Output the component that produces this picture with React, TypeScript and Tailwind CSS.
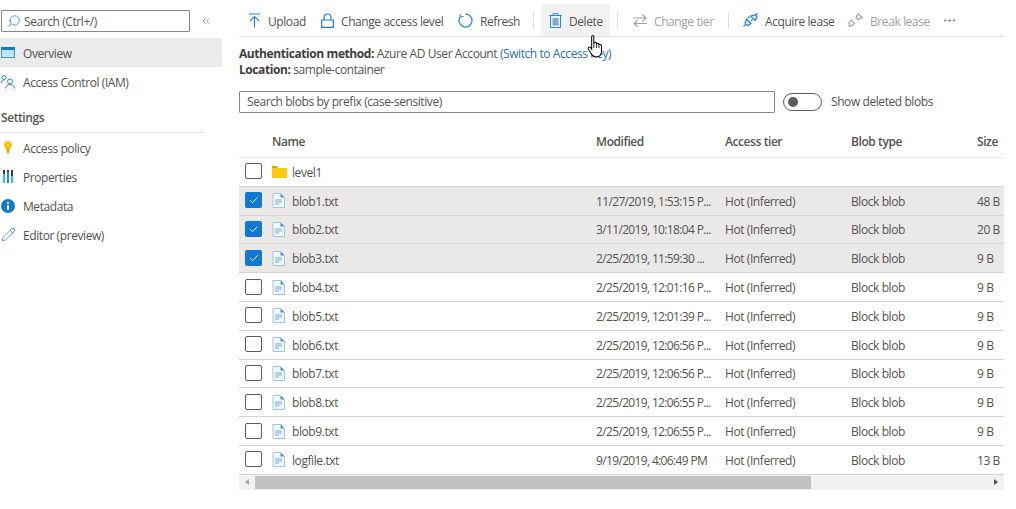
import React from "react";
import { ChevronsLeft, Search, MoreHorizontal, Pencil } from "lucide-react";

const rows = [
  { name: "level1", modified: "", tier: "", type: "", size: "", folder: true },
  { name: "blob1.txt", modified: "11/27/2019, 1:53:15 P...", tier: "Hot (Inferred)", type: "Block blob", size: "48 B", checked: true },
  { name: "blob2.txt", modified: "3/11/2019, 10:18:04 P...", tier: "Hot (Inferred)", type: "Block blob", size: "20 B", checked: true },
  { name: "blob3.txt", modified: "2/25/2019, 11:59:30 ...", tier: "Hot (Inferred)", type: "Block blob", size: "9 B", checked: true },
  { name: "blob4.txt", modified: "2/25/2019, 12:01:16 P...", tier: "Hot (Inferred)", type: "Block blob", size: "9 B" },
  { name: "blob5.txt", modified: "2/25/2019, 12:01:39 P...", tier: "Hot (Inferred)", type: "Block blob", size: "9 B" },
  { name: "blob6.txt", modified: "2/25/2019, 12:06:56 P...", tier: "Hot (Inferred)", type: "Block blob", size: "9 B" },
  { name: "blob7.txt", modified: "2/25/2019, 12:06:56 P...", tier: "Hot (Inferred)", type: "Block blob", size: "9 B" },
  { name: "blob8.txt", modified: "2/25/2019, 12:06:55 P...", tier: "Hot (Inferred)", type: "Block blob", size: "9 B" },
  { name: "blob9.txt", modified: "2/25/2019, 12:06:55 P...", tier: "Hot (Inferred)", type: "Block blob", size: "9 B" },
  { name: "logfile.txt", modified: "9/19/2019, 4:06:49 PM", tier: "Hot (Inferred)", type: "Block blob", size: "13 B" },
];

function FileIcon() {
  return (
    <svg width="13" height="15" viewBox="0 0 13 15" className="shrink-0">
      <path d="M1 .5h7.500L12.500 4.500v10H1z" fill="#f4f9fe" stroke="#9cc5ea" />
      <path d="M8.500.5v4h4z" fill="#4a90d9" />
      <path d="M3 7h7M3 9h7M3 11h4" stroke="#6fabe4" />
    </svg>
  );
}

function FolderIcon() {
  return (
    <svg width="15" height="12" viewBox="0 0 15 12" className="shrink-0">
      <path d="M0 1h5l1 1h9v10H0z" fill="#ffc90e" />
      <path d="M0 0h5l1 2H0z" fill="#d9a400" />
    </svg>
  );
}

function Checkbox({ checked }: { checked?: boolean }) {
  if (checked) {
    return (
      <div className="w-[17px] h-[16px] rounded-[2px] bg-[#0f78d4] flex items-center justify-center shrink-0">
        <svg width="10" height="8" viewBox="0 0 10 8">
          <path d="M1 4l2.600 2.600L9 1" fill="none" stroke="#fff" strokeWidth="1" />
        </svg>
      </div>
    );
  }
  return <div className="w-[17px] h-[16px] rounded-[2px] border border-[#605e5c] bg-white shrink-0" />;
}

function UploadIcon() {
  return (
    <svg width="13" height="15" viewBox="0 0 13 15" fill="none" stroke="#2b88d8" strokeWidth="1.200">
      <path d="M1 1h11M6.500 14.500V3.500M2 8l4.500-4.500L11 8" />
    </svg>
  );
}

function LockIcon() {
  return (
    <svg width="13" height="15" viewBox="0 0 13 15" fill="none" stroke="#1a7fd4" strokeWidth="1.200">
      <path d="M3 7V4.500a3.500 3.500 0 0 1 7 0V7" />
      <path d="M.7 7h11.600v7.300H.7z" />
    </svg>
  );
}

function RefreshIcon() {
  return (
    <svg width="15" height="15" viewBox="0 0 15 15" fill="none" stroke="#2b88d8" strokeWidth="1.300">
      <path d="M7.500 1a6.500 6.500 0 1 1-5.200 2.600" />
      <path d="M2 .8l.6 3 3-.3" strokeWidth="1" />
    </svg>
  );
}

function TrashIcon() {
  return (
    <svg width="13" height="15" viewBox="0 0 13 15">
      <path d="M0 2.500h13M4 2.500V.7h5v1.800" fill="none" stroke="#2b88d8" />
      <path d="M1.500 2.500h10v12h-10z" fill="#eaf3fb" stroke="#2b88d8" />
      <path d="M3.500 5h6v7.500h-6z" fill="#7fa9cc" />
    </svg>
  );
}

function SwapIcon() {
  return (
    <svg width="14" height="13" viewBox="0 0 14 13" fill="none" stroke="#a19f9d" strokeWidth="1.100">
      <path d="M0 4h13M9.500.5L13 4 9.500 7.500" />
      <path d="M14 9.500H1M4.500 6L1 9.500 4.500 13" />
    </svg>
  );
}

function PlugIcon({ color }: { color: string }) {
  return (
    <svg width="15" height="14" viewBox="0 0 15 14" fill="none" stroke={color} strokeWidth="1.200" className="shrink-0">
      <path d="M.5 13.500l2.500-2.500M12 3l2.500-2.500" />
      <path d="M3.500 6l4.500 4.500-1.500 1a2.300 2.300 0 0 1-3.500-3.500z" fill="#d7e9f8" />
      <path d="M7.500 3l4.500 4.500 1-1.500a2.300 2.300 0 0 0-3.500-3.500z" fill="#d7e9f8" />
      <path d="M5 5l1.500-1.500M8 8l1.500-1.500" />
    </svg>
  );
}

function BrokenPlugIcon() {
  return (
    <svg width="15" height="14" viewBox="0 0 15 14" fill="none" stroke="#a19f9d" strokeWidth="1.100" className="shrink-0">
      <path d="M.5 13.500L2 12" />
      <path d="M3 7l3.500 3.500-1.500 1.500a2.300 2.300 0 0 1-3.300-3.300z" />
      <path d="M8 4.500L10 .7l4 3.800-3.800 2.200z" />
    </svg>
  );
}

function PeopleIcon() {
  return (
    <svg width="14" height="14" viewBox="0 0 14 14" fill="none" stroke="#2b88d8" strokeWidth="1">
      <circle cx="3" cy="2.500" r="2" />
      <path d="M.5 8c0-2 1-3 3-3" />
      <circle cx="9" cy="6.500" r="2.500" />
      <path d="M4.500 13.500c0-2.500 2-4 4.500-4s4.500 1.500 4.500 4" />
    </svg>
  );
}

function KeyIcon() {
  return (
    <svg width="10" height="13" viewBox="0 0 10 13">
      <circle cx="5" cy="4" r="4" fill="#fcc419" />
      <path d="M3.500 7h3v4L5 13l-1.500-2z" fill="#e0a500" />
    </svg>
  );
}

function PropertiesIcon() {
  return (
    <svg width="12" height="13" viewBox="0 0 12 13">
      <path d="M1 0h2v13H1z" fill="#32bedd" />
      <path d="M5 0h2v13H5z" fill="#2b88d8" />
      <path d="M9 0h2v13H9z" fill="#32bedd" />
      <path d="M1 0h2v4H1zM9 0h2v6H9zM5 0h2v2H5z" fill="#3a3a3a" />
    </svg>
  );
}

function InfoIcon() {
  return (
    <svg width="14" height="14" viewBox="0 0 14 14">
      <circle cx="7" cy="7" r="7" fill="#0f78d4" />
      <path d="M6 6h2v5H6zM6 3h2v2H6z" fill="#fff" />
    </svg>
  );
}

function NavItem({ icon, label, active }: { icon: React.ReactNode; label: string; active?: boolean }) {
  return (
    <div className={`h-[29px] flex items-center ${active ? "bg-[#ebebeb]" : ""}`}>
      <div className="w-[23px] pl-[1px] flex justify-start">{icon}</div>
      <span className="pt-[2px]">{label}</span>
    </div>
  );
}

function Sep() {
  return <div className="w-px h-[17px] bg-[#e1dfdd]" />;
}

function ToolText({ width, children }: { width: string; children: React.ReactNode }) {
  return <span className={`${width} pt-[3px] whitespace-nowrap`}>{children}</span>;
}

export default function App() {
  return (
    <div className="w-[1016px] h-[509px] bg-white flex overflow-hidden relative text-[12px] text-[#555351] font-['Open_Sans',sans-serif] tracking-[-0.42px]">
      {/* Left menu */}
      <div className="w-[222px] shrink-0 pt-[10px]">
        <div className="flex items-center h-[22px]">
          <div className="ml-[1px] w-[189px] h-[22px] border border-[#8a8886] rounded-[1px] flex items-center pl-[5px] gap-[3px]">
            <Search className="w-[14px] h-[14px] text-[#3f8fd8] -scale-x-100" strokeWidth={1.5} />
            <span className="pt-[2px]">Search (Ctrl+/)</span>
          </div>
          <ChevronsLeft className="ml-[10px] w-[12px] h-[12px] text-[#605e5c]" strokeWidth={1.2} />
        </div>
        <div className="mt-[6px]">
          <NavItem
            active
            label="Overview"
            icon={<div className="w-[14px] h-[11px] bg-[#c5e3f6] border border-[#3b9ad9] border-t-[3px] border-t-[#0f78d4]" />}
          />
          <NavItem label="Access Control (IAM)" icon={<PeopleIcon />} />
        </div>
        <div className="mt-[12px] pl-[1px] pt-[1px] h-[25px] w-[203px] border-b border-[#e1dfdd] font-semibold">Settings</div>
        <div>
          <NavItem label="Access policy" icon={<div className="pl-[2px]"><KeyIcon /></div>} />
          <NavItem label="Properties" icon={<div className="pl-[1px]"><PropertiesIcon /></div>} />
          <NavItem label="Metadata" icon={<InfoIcon />} />
          <NavItem label="Editor (preview)" icon={<Pencil className="w-[15px] h-[15px] text-[#2f6fb8]" strokeWidth={1.2} />} />
        </div>
      </div>

      {/* Main content */}
      <div className="ml-[17px] w-[765px] shrink-0 pt-[4px]">
        <div className="h-[33px] flex items-center border-b border-[#e1dfdd]">
          <div className="ml-[9px] w-[13px]"><UploadIcon /></div>
          <div className="ml-[7px] flex"><ToolText width="w-[38px]">Upload</ToolText></div>
          <div className="ml-[15px] w-[13px]"><LockIcon /></div>
          <div className="ml-[7px] flex"><ToolText width="w-[103px]">Change access level</ToolText></div>
          <div className="ml-[14px] w-[15px]"><RefreshIcon /></div>
          <div className="ml-[7px] flex"><ToolText width="w-[38px]">Refresh</ToolText></div>
          <div className="ml-[15px]"><Sep /></div>
          <div className="ml-[7px] w-[69px] h-[32px] bg-[#f3f2f1] flex items-center pl-[8px] gap-[7px]">
            <TrashIcon />
            <ToolText width="w-[33px]">Delete</ToolText>
          </div>
          <div className="ml-[7px]"><Sep /></div>
          <div className="ml-[15px] flex items-center text-[#a19f9d]">
            <SwapIcon />
            <div className="ml-[7px] flex"><ToolText width="w-[60px]">Change tier</ToolText></div>
          </div>
          <div className="ml-[14px]"><Sep /></div>
          <div className="ml-[14px] flex items-center">
            <PlugIcon color="#2b88d8" />
            <div className="ml-[7px] flex"><ToolText width="w-[68px]">Acquire lease</ToolText></div>
          </div>
          <div className="ml-[15px] flex items-center text-[#a19f9d]">
            <BrokenPlugIcon />
            <div className="ml-[7px] flex"><ToolText width="w-[57px]">Break lease</ToolText></div>
          </div>
          <MoreHorizontal className="ml-[15px] w-[15px] h-[15px] text-[#605e5c]" strokeWidth={1.5} />
        </div>

        <div className="mt-[9px] leading-[16px]">
          <div>
            <span className="font-bold text-[#3f3e3c]">Authentication method:</span>{" "}
            <span>Azure AD User Account</span> <span className="text-[#2a6fb8]">(Switch to Access key)</span>
          </div>
          <div>
            <span className="font-bold text-[#3f3e3c]">Location:</span> <span>sample-container</span>
          </div>
        </div>

        <div className="mt-[13px] flex items-center">
          <div className="w-[536px] h-[22px] border border-[#8a8886] rounded-[1px] flex items-center pl-[7px]">
            Search blobs by prefix (case-sensitive)
          </div>
          <div className="ml-[8px] w-[39px] h-[18px] border border-[#605e5c] rounded-full flex items-center pl-[4px]">
            <div className="w-[10px] h-[10px] rounded-full bg-[#605e5c]" />
          </div>
          <span className="ml-[9px]">Show deleted blobs</span>
        </div>

        {/* Blob table */}
        <div className="mt-[14px]">
          <div className="h-[31px] flex items-center border-b border-[#edebe9] font-semibold">
            <div className="w-[33px]" />
            <div className="w-[324px]">Name</div>
            <div className="w-[129px]">Modified</div>
            <div className="w-[126px]">Access tier</div>
            <div className="w-[126px]">Blob type</div>
            <div>Size</div>
          </div>
          {rows.map((row) => (
            <div
              key={row.name}
              className={`h-[28.8px] flex items-center border-b border-[#d6d4d2] ${row.checked ? "bg-[#ebe9e8]" : ""}`}
            >
              <div className="w-[33px] pl-[6px] pb-[1px]">
                <Checkbox checked={row.checked} />
              </div>
              <div className="w-[324px] flex items-center">
                <div className="w-[20px]">{row.folder ? <FolderIcon /> : <FileIcon />}</div>
                <span className="pt-[2px]">{row.name}</span>
              </div>
              <div className="w-[129px] pt-[2px] whitespace-nowrap overflow-hidden tracking-[-0.65px]">{row.modified}</div>
              <div className="w-[126px] pt-[2px]">{row.tier}</div>
              <div className="w-[126px] pt-[2px]">{row.type}</div>
              <div className="pt-[2px] whitespace-nowrap">{row.size}</div>
            </div>
          ))}
          {/* Horizontal scrollbar */}
          <div className="h-[15px] bg-[#f1f1f1] flex items-center">
            <div className="w-[16px] flex justify-center">
              <div className="w-0 h-0 border-y-[3px] border-y-transparent border-r-[4px] border-r-[#a3a3a3]" />
            </div>
            <div className="w-[556px] h-[13px] bg-[#c1c1c1]" />
            <div className="flex-1 flex justify-end pr-[6px]">
              <div className="w-0 h-0 border-y-[3px] border-y-transparent border-l-[4px] border-l-[#505050]" />
            </div>
          </div>
        </div>
      </div>

      {/* Mouse pointer over the Delete button */}
      <svg width="18" height="24" viewBox="0 0 16 22" className="absolute left-[587px] top-[35px]">
        <path
          d="M4 1.500c0-1.300 2-1.300 2 0V8l.5-1c1-.5 2 0 2 1 .7-.7 2-.4 2.200.7.800-.5 2.300 0 2.300 1.300v5c0 2.500-1.500 5-4 5H7.500c-2 0-3-1-4-3L1 13c-.7-1.500 1-2.700 2-1.500l1 1.500z"
          fill="#fff"
          stroke="#111"
          strokeWidth="1"
        />
        <path d="M6 8v4M8.500 8v4M10.700 9v3" stroke="#111" strokeWidth="0.8" fill="none" />
      </svg>
    </div>
  );
}
